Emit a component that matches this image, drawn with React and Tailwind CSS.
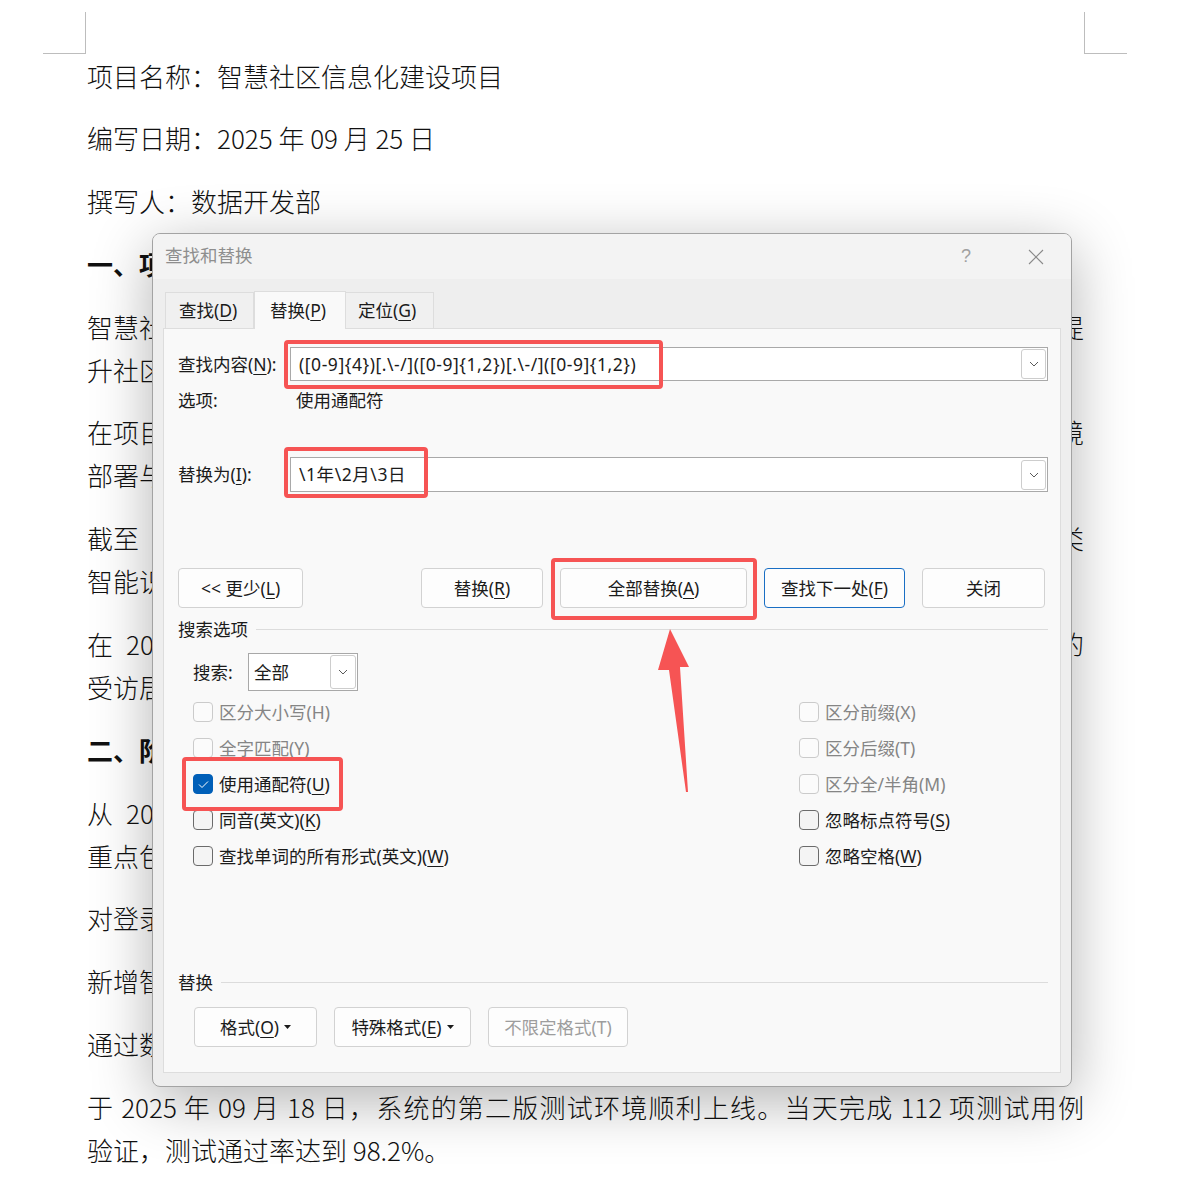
import React from 'react';

const docLines = [
  { t: ['项目名称：智慧社区信息化建设项目'] },
  { t: ['编写日期：2025 年 09 月 25 日'] },
  { t: ['撰写人：数据开发部'] },
  { b: true, t: ['一、项目概述'] },
  { t: [['智慧社区信息化建设项目旨在通过物联网、大数据等技术手段，全面', '提'], '升社区治理能力与居民服务水平。'] },
  { t: [['在项目实施过程中，团队完成了需求调研、方案设计与测试环', '境'], '部署与联调等关键工作。'] },
  { t: [['截至\u3000\u3000目前，系统已接入门禁、监控、停车等多', '类'], '智能识别设备，累计采集数据超过百万条。'] },
  { t: [['在\u20022025 年第三季度开展的满意度调查中，超过九成', '的'], '受访居民对系统表示满意。'] },
  { b: true, t: ['二、阶段进展'] },
  { t: [['从\u20022025 年 07 月开始，项目进入第二阶段建设，', ''], '重点包括数据中台建设与应用扩展。'] },
  { t: ['对登录模块进行了安全加固，支持多因素认证。'] },
  { t: ['新增智能报警功能，实现异常事件自动推送。'] },
  { t: ['通过数据可视化大屏，实时展示社区运行状态。'] },
  { t: ['于 2025 年 09 月 18 日，系统的第二版测试环境顺利上线。当天完成 112 项测试用例', '验证，测试通过率达到 98.2%。'], justifyFirst: true },
];

const U = ({ children }) => <span className="underline underline-offset-[3px] decoration-1">{children}</span>;

const Acc = ({ text, k, plain }) => (
  <span>
    {text}({plain ? k : <U>{k}</U>})
  </span>
);

function Chevron() {
  return (
    <svg width="10" height="6" viewBox="0 0 10 6" fill="none">
      <path d="M1 1l4 4 4-4" stroke="#5a5a5a" strokeWidth="1" />
    </svg>
  );
}

function Caret() {
  return (
    <svg width="7" height="4" viewBox="0 0 7 4" className="ml-[5px]">
      <path d="M0 0h7L3.5 4z" fill="#1b1b1b" />
    </svg>
  );
}

function RedBox({ className }) {
  return <span className={`pointer-events-none absolute rounded-[4px] border-[4px] border-[#f65454] ${className}`} />;
}

function Combo({ value, children }) {
  return (
    <div className="relative flex-1 h-full bg-white border border-[#a9a9a9] flex items-center pl-[8px] pr-[1px]">
      <span className="whitespace-nowrap tracking-[0.55px]">{value}</span>
      <div className="ml-auto w-[25px] h-[30px] border border-[#cdcdcd] rounded-[3px] flex items-center justify-center">
        <Chevron />
      </div>
      {children}
    </div>
  );
}

function Btn({ w, children, primary, disabled }) {
  return (
    <div
      className={`h-full ${w} flex items-center justify-center rounded-[4px] border bg-[#fdfdfd] ${
        primary ? 'border-[#1a6fc4]' : 'border-[#d2d2d2]'
      } ${disabled ? 'text-[#9d9d9d]' : ''}`}
    >
      {children}
    </div>
  );
}

function Check({ state, children }) {
  const box =
    state === 'on'
      ? 'bg-[#005fb8] border-[#005fb8]'
      : state === 'off'
      ? 'bg-[#f4f4f4] border-[#6b6b6b]'
      : 'bg-[#fbfbfb] border-[#cbcbcb]';
  return (
    <div className={`flex items-center h-[36px] ${state === 'disabled' ? 'text-[#858585]' : ''}`}>
      <span className={`w-[20px] h-[20px] rounded-[4px] border flex items-center justify-center ${box}`}>
        {state === 'on' && (
          <svg width="11" height="9" viewBox="0 0 11 9" fill="none">
            <path d="M1 4.5l3 3L10 1.5" stroke="white" strokeWidth="1" />
          </svg>
        )}
      </span>
      <span className="ml-[6px]">{children}</span>
    </div>
  );
}

function SectionHead({ title }) {
  return (
    <div className="flex items-center h-[24px]">
      <span>{title}</span>
      <span className="flex-1 h-px bg-[#dcdcdc] ml-[8px]" />
    </div>
  );
}

function Dialog() {
  return (
    <div className="absolute left-[152px] top-[233px] w-[920px] h-[854px] rounded-[8px] border border-[#a3a3a3] bg-[#eeeeee] shadow-[0_14px_60px_rgba(0,0,0,0.3)] overflow-hidden flex flex-col font-['Noto_Sans','Noto_Sans_CJK_SC',sans-serif] text-[17.5px] text-[#1b1b1b]">
      <div className="h-[45px] shrink-0 bg-[#f3f3f3] flex items-center pl-[12px] pr-[27px]">
        <span className="text-[#8e8e8e] -mt-[3px]">查找和替换</span>
        <span className="ml-auto text-[#a0a0a0] text-[18px] font-['Liberation_Sans',sans-serif]">?</span>
        <svg width="16" height="16" viewBox="0 0 16 16" className="ml-[57px]">
          <path d="M1 1l14 14M15 1L1 15" stroke="#8a8a8a" strokeWidth="1.1" />
        </svg>
      </div>

      <div className="mt-[11px] h-[38px] shrink-0 flex items-end pl-[12px]">
        <div className="h-[36px] w-[89px] border border-b-0 border-[#dddddd] bg-[#f0f0f0] flex items-center pl-[13px]">
          <Acc text="查找" k="D" />
        </div>
        <div className="relative z-10 h-[38px] -mb-px w-[92px] border border-b-0 border-[#dddddd] bg-[#f9f9f9] flex items-center pl-[15px]">
          <Acc text="替换" k="P" />
        </div>
        <div className="h-[36px] w-[88px] border border-b-0 border-l-0 border-[#dddddd] bg-[#f0f0f0] flex items-center pl-[12px]">
          <Acc text="定位" k="G" />
        </div>
      </div>

      <div className="mx-[10px] mb-[13px] flex-1 border border-[#dddddd] bg-[#f9f9f9] pl-[14px] pr-[12px] pt-[18px] flex flex-col">
        <div className="flex items-center h-[34px]">
          <span className="w-[112px]">
            查找内容(<U>N</U>):
          </span>
          <Combo value="([0-9]{4})[.\-/]([0-9]{1,2})[.\-/]([0-9]{1,2})">
            <RedBox className="-left-[7px] -top-[8px] w-[379px] h-[49px]" />
          </Combo>
        </div>

        <div className="flex items-center h-[24px] mt-[7px]">
          <span className="w-[118px]">选项:</span>
          <span>使用通配符</span>
        </div>

        <div className="flex items-center h-[35px] mt-[45px]">
          <span className="w-[112px]">
            替换为(<U>I</U>):
          </span>
          <Combo value="\1年\2月\3日">
            <RedBox className="-left-[7px] -top-[11px] w-[144px] h-[51px]" />
          </Combo>
        </div>

        <div className="flex h-[40px] mt-[76px]">
          <Btn w="w-[125px]">
            {'<< 更少('}
            <U>L</U>)
          </Btn>
          <div className="ml-[118px] h-full">
            <Btn w="w-[122px]">
              <Acc text="替换" k="R" />
            </Btn>
          </div>
          <div className="relative ml-[17px] h-full">
            <Btn w="w-[187px]">
              <Acc text="全部替换" k="A" />
            </Btn>
            <RedBox className="-left-[9px] -top-[10px] w-[206px] h-[62px]" />
          </div>
          <div className="ml-[17px] h-full">
            <Btn w="w-[141px]" primary>
              <Acc text="查找下一处" k="F" />
            </Btn>
          </div>
          <div className="ml-[17px] h-full">
            <Btn w="w-[123px]">关闭</Btn>
          </div>
        </div>

        <div className="mt-[9px]">
          <SectionHead title="搜索选项" />
        </div>

        <div className="flex items-center h-[38px] mt-[12px] pl-[15px]">
          <span className="w-[55px]">搜索:</span>
          <div className="w-[110px] h-full bg-white border border-[#a8a8a8] flex items-center pl-[5px] pr-[1px]">
            <span>全部</span>
            <div className="ml-auto w-[26px] h-[34px] border border-[#cdcdcd] rounded-[3px] flex items-center justify-center">
              <Chevron />
            </div>
          </div>
        </div>

        <div className="mt-[3px] pl-[15px] grid grid-cols-[606px_1fr]">
          <Check state="disabled">区分大小写(H)</Check>
          <Check state="disabled">区分前缀(X)</Check>
          <Check state="disabled">全字匹配(Y)</Check>
          <Check state="disabled">区分后缀(T)</Check>
          <div className="relative">
            <Check state="on">
              <Acc text="使用通配符" k="U" />
            </Check>
            <RedBox className="-left-[11px] -top-[9px] w-[161px] h-[54px]" />
          </div>
          <Check state="disabled">区分全/半角(M)</Check>
          <Check state="off">
            <Acc text="同音(英文)" k="K" />
          </Check>
          <Check state="off">
            <Acc text="忽略标点符号" k="S" />
          </Check>
          <Check state="off">
            <Acc text="查找单词的所有形式(英文)" k="W" />
          </Check>
          <Check state="off">
            <Acc text="忽略空格" k="W" />
          </Check>
        </div>

        <div className="mt-[96px]">
          <SectionHead title="替换" />
        </div>

        <div className="flex h-[40px] mt-[13px] pl-[16px] gap-[17px]">
          <Btn w="w-[123px]">
            <Acc text="格式" k="O" />
            <Caret />
          </Btn>
          <Btn w="w-[137px]">
            <Acc text="特殊格式" k="E" />
            <Caret />
          </Btn>
          <Btn w="w-[140px]" disabled>
            不限定格式(T)
          </Btn>
        </div>
      </div>
    </div>
  );
}

export default function App() {
  return (
    <div className="relative w-[1200px] h-[1203px] overflow-hidden bg-white font-['Noto_Sans_CJK_SC','Noto_Sans',sans-serif] text-[#111]">
      <div className="flex justify-between h-[54px]">
        <div className="ml-[43px] mt-[12px] w-[43px] h-[42px] border-r border-b border-[#bdbdbd]" />
        <div className="mr-[73px] mt-[12px] w-[43px] h-[42px] border-l border-b border-[#bdbdbd]" />
      </div>

      <div className="ml-[87px] w-[997px] -mt-[0.5px] text-[26px] leading-[43px] font-light">
        {docLines.map((p, i) => (
          <div key={i} className={`mb-[19.8px] ${p.b ? 'font-bold' : ''}`}>
            {p.t.map((line, j) =>
              Array.isArray(line) ? (
                <div key={j} className="flex justify-between whitespace-nowrap">
                  <span>{line[0]}</span>
                  <span>{line[1]}</span>
                </div>
              ) : (
                <div
                  key={j}
                  className={`whitespace-nowrap ${p.justifyFirst && j === 0 ? 'text-justify [text-align-last:justify]' : ''}`}
                >
                  {line}
                </div>
              )
            )}
          </div>
        ))}
      </div>

      <Dialog />

      <svg className="pointer-events-none absolute left-0 top-0" width="1200" height="1203">
        <polygon points="670,629 689,667 680,667 688,792 686,792 669,670 658,670" fill="#f65454" />
      </svg>
    </div>
  );
}
